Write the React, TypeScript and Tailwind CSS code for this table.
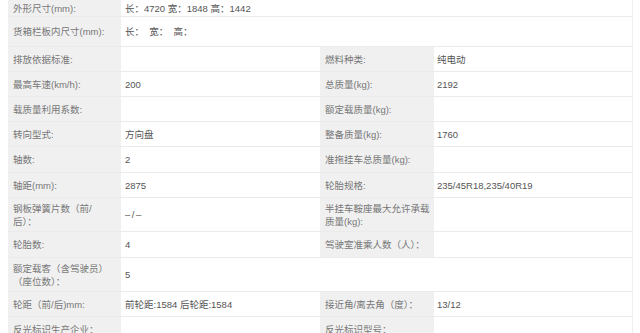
import React from "react";

type Row = {
  h: number;
  l1: React.ReactNode;
  v1?: React.ReactNode;
  l2?: React.ReactNode;
  v2?: string;
  full?: boolean;
};

const rows: Row[] = [
  { h: 17, l1: "外形尺寸(mm):", v1: "长：4720 宽：1848 高：1442", full: true },
  { h: 30, l1: "货箱栏板内尺寸(mm):", v1: "长：  宽：  高：", full: true },
  { h: 25, l1: "排放依据标准:", v1: "", l2: "燃料种类:", v2: "纯电动" },
  { h: 25, l1: "最高车速(km/h):", v1: "200", l2: "总质量(kg):", v2: "2192" },
  { h: 25, l1: "载质量利用系数:", v1: "", l2: "额定载质量(kg):", v2: "" },
  { h: 25, l1: "转向型式:", v1: "方向盘", l2: "整备质量(kg):", v2: "1760" },
  { h: 26, l1: "轴数:", v1: "2", l2: "准拖挂车总质量(kg):", v2: "" },
  { h: 25, l1: "轴距(mm):", v1: "2875", l2: "轮胎规格:", v2: "235/45R18,235/40R19" },
  {
    h: 34,
    l1: (
      <>
        钢板弹簧片数（前/
        <br />
        后）：
      </>
    ),
    v1: <span className="tracking-[1.5px]">–/–</span>,
    l2: (
      <>
        半挂车鞍座最大允许承载
        <br />
        质量(kg):
      </>
    ),
    v2: "",
  },
  { h: 26, l1: "轮胎数:", v1: "4", l2: "驾驶室准乘人数（人）：", v2: "" },
  {
    h: 34,
    l1: (
      <>
        额定载客（含驾驶员）
        <br />
        （座位数）：
      </>
    ),
    v1: "5",
    full: true,
  },
  { h: 25, l1: "轮距（前/后)mm:", v1: "前轮距:1584 后轮距:1584", l2: "接近角/离去角（度）：", v2: "13/12" },
  { h: 26, l1: "反光标识生产企业：", v1: "", l2: "反光标识型号：", v2: "" },
];

export default function App() {
  return (
    <div
      className="w-[640px] h-[333px] overflow-hidden bg-white"
      style={{ fontFamily: '"Liberation Sans", "Noto Sans CJK SC", sans-serif' }}
    >
      <div className="ml-[8px] w-[625px] border-r border-[#efefef] flex flex-col text-[9.5px] leading-[13px]">
        {rows.map((r, i) => (
          <div key={i} className="flex border-b border-[#ebebeb]" style={{ height: r.h }}>
            <div className="w-[113px] shrink-0 bg-[#f0f0f0] text-[#777777] pl-[5px] flex items-center whitespace-nowrap">
              <span>{r.l1}</span>
            </div>
            {r.full ? (
              <div className="flex-1 pl-[4px] flex items-center text-[#555555] whitespace-pre">{r.v1}</div>
            ) : (
              <>
                <div className="w-[199px] shrink-0 pl-[4px] flex items-center text-[#555555]">{r.v1}</div>
                <div className="w-[114px] shrink-0 bg-[#f0f0f0] text-[#777777] pl-[5px] flex items-center whitespace-nowrap">
                  <span>{r.l2}</span>
                </div>
                <div className="flex-1 pl-[3px] flex items-center text-[#555555]">{r.v2}</div>
              </>
            )}
          </div>
        ))}
      </div>
    </div>
  );
}
